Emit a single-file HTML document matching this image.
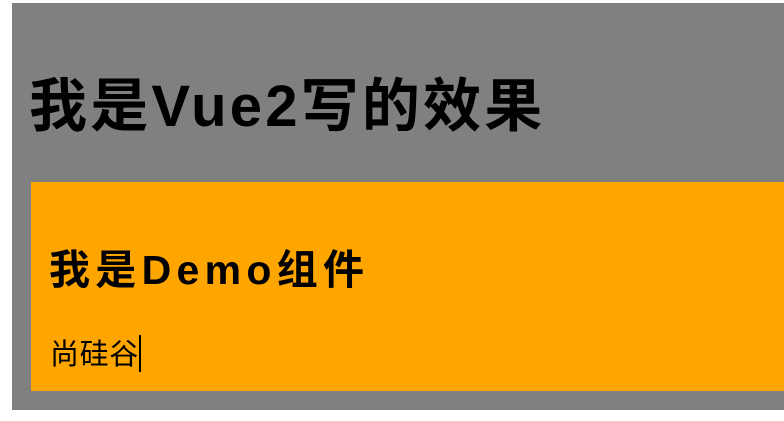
<!DOCTYPE html>
<html><head><meta charset="utf-8"><style>
html,body{margin:0;padding:0;background:#fff;width:784px;height:421px;overflow:hidden}
body{font-family:"Liberation Sans","Noto Sans CJK SC",sans-serif;color:#000;position:relative}
.app{position:absolute;left:12px;top:3px;width:772px;height:407px;background:#808080}
.demo{position:absolute;left:31px;top:182px;width:753px;height:209px;background:#ffa500}
h1{position:absolute;left:29px;top:77px;margin:0;font-size:58px;line-height:60px;font-weight:bold;white-space:nowrap;letter-spacing:3.2px}
h2{position:absolute;left:49px;top:248px;margin:0;font-size:41px;line-height:44px;font-weight:bold;white-space:nowrap;letter-spacing:5.3px}
.txt{position:absolute;left:50px;top:338px;font-size:29px;line-height:34px;white-space:nowrap;letter-spacing:0.6px}
.caret{position:absolute;left:139px;top:335px;width:2px;height:37px;background:#000}
</style></head><body>
<div class="app"></div>
<h1>我是Vue2写的效果</h1>
<div class="demo"></div>
<h2>我是Demo组件</h2>
<div class="txt">尚硅谷</div>
<div class="caret"></div>
</body></html>
